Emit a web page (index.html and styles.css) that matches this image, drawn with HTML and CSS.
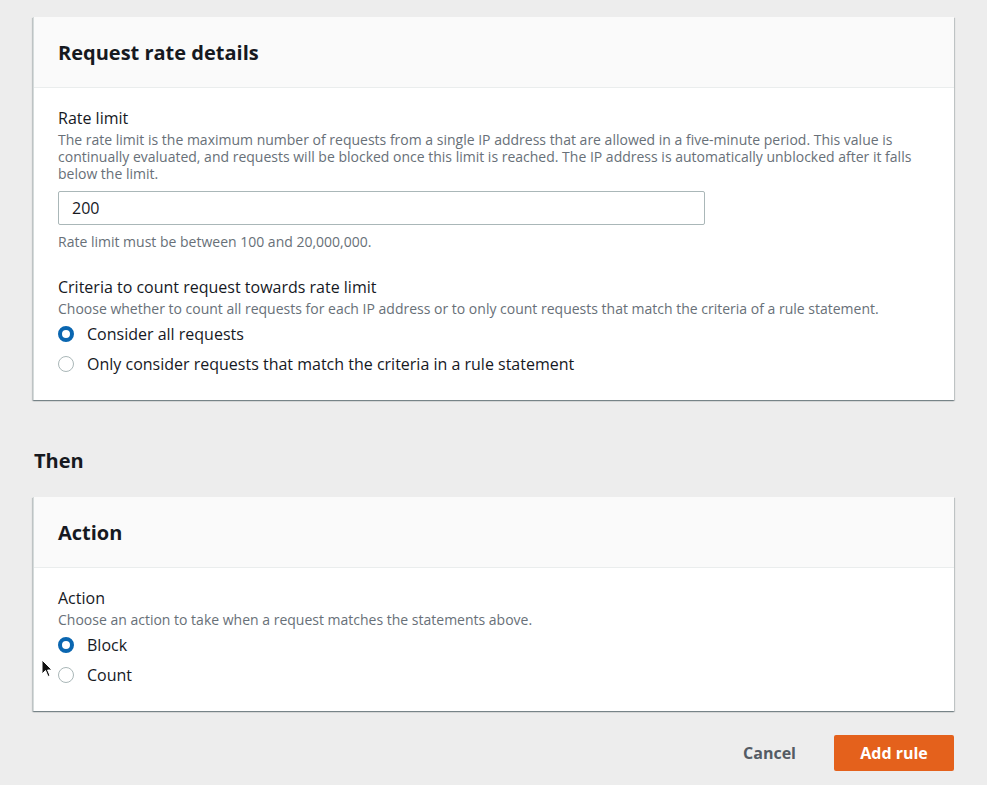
FILE: index.html
```html
<!DOCTYPE html>
<html>
<head>
<meta charset="utf-8">
<link rel="stylesheet" href="styles.css">
</head>
<body>
<div class="page">
  <section class="card">
    <div class="card-header"><h2 class="card-title">Request rate details</h2></div>
    <div class="card-body">
      <div class="field">
        <div class="label">Rate limit</div>
        <div class="desc">The rate limit is the maximum number of requests from a single IP address that are allowed in a five-minute period. This value is continually evaluated, and requests will be blocked once this limit is reached. The IP address is automatically unblocked after it falls below the limit.</div>
        <div class="input">200</div>
        <div class="hint">Rate limit must be between 100 and 20,000,000.</div>
      </div>
      <div class="field field-gap">
        <div class="label">Criteria to count request towards rate limit</div>
        <div class="desc">Choose whether to count all requests for each IP address or to only count requests that match the criteria of a rule statement.</div>
        <div class="radios">
          <div class="radio-row"><span class="radio checked"></span><span class="radio-label">Consider all requests</span></div>
          <div class="radio-row"><span class="radio"></span><span class="radio-label">Only consider requests that match the criteria in a rule statement</span></div>
        </div>
      </div>
    </div>
  </section>

  <h2 class="section-title">Then</h2>

  <section class="card">
    <div class="card-header"><h2 class="card-title">Action</h2></div>
    <div class="card-body">
      <div class="field">
        <div class="label">Action</div>
        <div class="desc">Choose an action to take when a request matches the statements above.</div>
        <div class="radios">
          <div class="radio-row"><span class="radio checked"></span><span class="radio-label">Block</span></div>
          <div class="radio-row"><span class="radio"></span><span class="radio-label">Count</span></div>
        </div>
      </div>
    </div>
  </section>

  <div class="actions">
    <button class="btn-link">Cancel</button>
    <button class="btn-primary">Add rule</button>
  </div>

  <svg class="cursor" width="12" height="19" viewBox="0 0 12 19"><path d="M1 1 L1 15 L4.5 11.5 L7 17.5 L9 16.6 L6.6 11 L11 11 Z" fill="#111" stroke="#fff" stroke-width="1"/></svg>
</div>
</body>
</html>
```
FILE: styles.css
```css
* { box-sizing: border-box; }
html, body { margin: 0; padding: 0; }
body {
  background: #ededed;
  font-family: "Open Sans", "Noto Sans", Arial, sans-serif;
  color: #16191f;
}
.page {
  position: relative;
  padding: 17px 33px 0 33px;
  min-height: 785px;
}
.card {
  background: #fff;
  border-left: 1px solid #d5dbdb;
  box-shadow: 0 1px 1px 0 rgba(0,28,36,0.3), 1px 1px 1px 0 rgba(0,28,36,0.15), -1px 1px 1px 0 rgba(0,28,36,0.15);
}
.card-header {
  background: #fafafa;
  border-bottom: 1px solid #eaeded;
  padding: 24px 24px 22px;
}
.card-title {
  margin: 0;
  font-size: 20px;
  line-height: 24px;
  font-weight: 700;
}
.card-body {
  padding: 19px 24px 21px;
}
.label {
  font-size: 16px;
  line-height: 22px;
}
.desc, .hint {
  font-size: 14px;
  line-height: 17px;
  color: #687078;
}
.desc { margin-top: 2px; }
.input {
  margin-top: 9px;
  width: 647px;
  height: 34px;
  border: 1px solid #aab7b8;
  border-radius: 2px;
  font-size: 16px;
  line-height: 33px;
  padding-left: 13px;
}
.hint { margin-top: 8px; }
.field-gap { margin-top: 26px; }
.radios { margin-top: 2px; }
.radio-row {
  display: flex;
  align-items: center;
  height: 30px;
}
.radio {
  width: 16px;
  height: 16px;
  border-radius: 50%;
  border: 1.5px solid #aab7b8;
  background: #fff;
  flex: none;
}
.radio.checked {
  border: 4.5px solid #0a66b0;
}
.radio-label {
  margin-left: 13px;
  font-size: 16px;
  line-height: 20px;
}
.section-title {
  margin: 49px 0 24px 1px;
  font-size: 20px;
  line-height: 24px;
  font-weight: 700;
}
.actions {
  display: flex;
  justify-content: flex-end;
  align-items: center;
  margin-top: 24px;
  gap: 18px;
}
.btn-link {
  background: none;
  border: none;
  font-family: inherit;
  font-size: 16px;
  font-weight: 700;
  color: #545b64;
  padding: 0 20px;
  height: 36px;
}
.btn-primary {
  background: #e4611c;
  border: none;
  border-radius: 2px;
  font-family: inherit;
  font-size: 16px;
  font-weight: 700;
  color: #fff;
  width: 120px;
  height: 36px;
}
.cursor {
  position: absolute;
  left: 41px;
  top: 659px;
}
```
